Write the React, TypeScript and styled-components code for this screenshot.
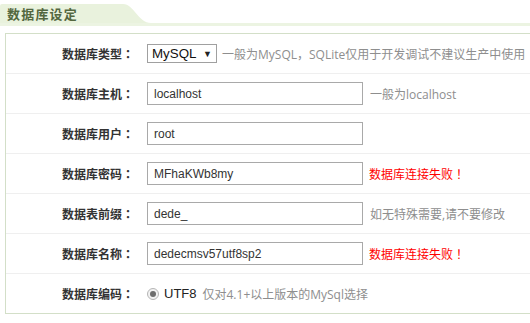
import styled, { createGlobalStyle } from 'styled-components';

const GlobalStyle = createGlobalStyle`
  html, body {
    margin: 0;
    padding: 0;
    background: #fff;
    overflow: hidden;
  }
  body {
    font-family: "Liberation Sans", "Noto Sans CJK SC", sans-serif;
    font-size: 12px;
    color: #333;
  }
`;

const Page = styled.div`
  width: 530px;
  padding-top: 4px;
`;

const Header = styled.div`
  display: flex;
  flex-direction: column;
`;

const TabRow = styled.div`
  display: flex;
  align-items: flex-end;
  height: 19px;
`;

const Tab = styled.div`
  width: 116px;
  height: 19px;
  padding-left: 7px;
  background: #e9f2dd;
  border-top-left-radius: 2px;
  color: #53673f;
  font-family: "Noto Sans CJK SC", sans-serif;
  font-weight: bold;
  font-size: 13px;
  letter-spacing: 1.2px;
  line-height: 20px;
`;

const Strip = styled.div`
  height: 3px;
  background: #ecf4e2;
`;

const Panel = styled.div`
  margin: 7px -20px 0 5px;
  border: 1px solid #d3dfc8;
`;

const Row = styled.div<{ $last?: boolean }>`
  display: flex;
  align-items: center;
  height: 39px;
  border-bottom: ${(p) => (p.$last ? 'none' : '1px solid #efefef')};
  white-space: nowrap;
`;

const Label = styled.div`
  width: 128px;
  flex-shrink: 0;
  text-align: right;
  font-family: "Noto Sans CJK SC", sans-serif;
  font-weight: bold;
  font-size: 12px;
  color: #333;
  margin-right: 13px;
`;

/* full-width punctuation centred in its cell, as in the original rendering */
const Punct = styled.span`
  font-family: "Noto Sans CJK JP", sans-serif;
`;

const Input = styled.input`
  box-sizing: border-box;
  width: 216px;
  height: 23px;
  margin: 0;
  padding: 0 6px;
  border: 1px solid #a9a9a9;
  font-family: "Liberation Sans", sans-serif;
  font-size: 12px;
  color: #333;
  outline: none;
  flex-shrink: 0;
`;

const Select = styled.div`
  box-sizing: border-box;
  display: flex;
  align-items: center;
  justify-content: space-between;
  width: 70px;
  height: 19px;
  padding: 0 4px 0 4px;
  border: 1px solid #a0a0a0;
  font-family: "Liberation Sans", sans-serif;
  font-size: 13.33px;
  color: #111;
  flex-shrink: 0;
`;

const Arrow = styled.span`
  font-size: 9px;
  color: #222;
`;

const Hint = styled.span<{ $gap?: number }>`
  margin-left: ${(p) => p.$gap ?? 7}px;
  font-family: "Open Sans", "Noto Sans CJK SC", sans-serif;
  font-size: 12px;
  color: #8e8e8e;
`;

const ErrorText = styled.span`
  margin-left: 6px;
  font-family: "Noto Sans CJK SC", sans-serif;
  font-size: 12px;
  color: #ff0000;
`;

const Radio = styled.span`
  box-sizing: border-box;
  display: inline-flex;
  align-items: center;
  justify-content: center;
  width: 12px;
  height: 12px;
  border-radius: 50%;
  border: 1px solid #b5b5b5;
  background: #f2f2f2;
  flex-shrink: 0;
  &::after {
    content: '';
    width: 6px;
    height: 6px;
    border-radius: 50%;
    background: #6d6d6d;
  }
`;

const RadioText = styled.span`
  margin-left: 5px;
  font-family: "Liberation Sans", sans-serif;
  font-size: 13px;
  color: #222;
`;

function FieldLabel({ text }: { text: string }) {
  return (
    <Label>
      {text}
      <Punct>：</Punct>
    </Label>
  );
}

function Failed() {
  return (
    <ErrorText>
      数据库连接失败<Punct>！</Punct>
    </ErrorText>
  );
}

export default function App() {
  return (
    <Page>
      <GlobalStyle />
      <Header>
        <TabRow>
          <Tab>数据库设定</Tab>
          <svg width="28" height="19" viewBox="0 0 28 19">
            <path d="M0 0 C 11 0, 15 19, 28 19 L0 19 Z" fill="#e9f2dd" />
          </svg>
        </TabRow>
        <Strip />
      </Header>
      <Panel>
        <Row>
          <FieldLabel text="数据库类型" />
          <Select>
            MySQL <Arrow>▼</Arrow>
          </Select>
          <Hint $gap={5}>一般为MySQL，SQLite仅用于开发调试不建议生产中使用</Hint>
        </Row>
        <Row>
          <FieldLabel text="数据库主机" />
          <Input defaultValue="localhost" />
          <Hint>一般为localhost</Hint>
        </Row>
        <Row>
          <FieldLabel text="数据库用户" />
          <Input defaultValue="root" />
        </Row>
        <Row>
          <FieldLabel text="数据库密码" />
          <Input defaultValue="MFhaKWb8my" />
          <Failed />
        </Row>
        <Row>
          <FieldLabel text="数据表前缀" />
          <Input defaultValue="dede_" />
          <Hint>如无特殊需要,请不要修改</Hint>
        </Row>
        <Row>
          <FieldLabel text="数据库名称" />
          <Input defaultValue="dedecmsv57utf8sp2" />
          <Failed />
        </Row>
        <Row $last>
          <FieldLabel text="数据库编码" />
          <Radio />
          <RadioText>UTF8</RadioText>
          <Hint $gap={6}>仅对4.1+以上版本的MySql选择</Hint>
        </Row>
      </Panel>
    </Page>
  );
}
